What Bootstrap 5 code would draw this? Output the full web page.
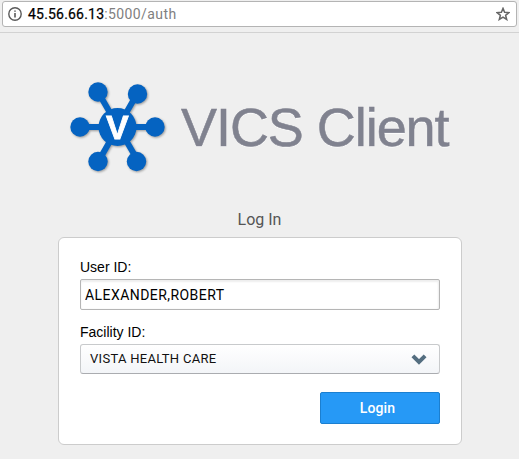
<!DOCTYPE html>
<html lang="en">
<head>
<meta charset="utf-8">
<meta name="viewport" content="width=device-width, initial-scale=1">
<title>VICS Client</title>
<link href="https://cdn.jsdelivr.net/npm/bootstrap@5.3.0/dist/css/bootstrap.min.css" rel="stylesheet">
<style>
body{background:#efefef;font-family:"Liberation Sans",Arial,sans-serif;font-size:14px;line-height:16px;color:#000;height:459px;overflow:hidden}
.browser-bar{height:33px;padding:1px 2px 0;border-bottom:1px solid #d2d2d2}
.address{height:26px;background:#fff;border:1px solid #b4b4b4;border-radius:3px;padding:0 6px 0 5px;font-family:Roboto,sans-serif;font-size:14px}
.address .host{margin-left:6px;letter-spacing:.2px;-webkit-text-stroke:.25px #000}
.address .path{color:#808080;letter-spacing:.4px}
.brand{height:94px;margin-top:48px;padding-left:68px}
.brand h1{font-size:54px;line-height:60px;letter-spacing:-1.05px;color:#80828f;-webkit-text-stroke:.5px #80828f;text-shadow:0 1px 0 #fff;font-weight:400;margin:0 0 3px 13px}
.login-title{margin-top:34px;height:28px;font-size:16px;line-height:22px;font-family:Roboto,sans-serif;color:#555}
.login-box{width:404px;height:208px;margin:0 auto 0 58px;border:1px solid #ccc;border-radius:6px;padding:21px}
.login-box label{height:20px;line-height:16px}
.login-box .facility-label{margin-top:14px}
.user-field{height:31px;padding:0 4px;border:1px solid #b5b5b5;border-radius:2px;background:#fff;box-shadow:inset 0 2px 2px #eee,inset -1px 0 2px #eee;font-family:Roboto,sans-serif;font-size:14px;letter-spacing:.44px;color:#000}
.facility{height:30px;padding:0 12px 0 9px;border:1px solid #c8cacc;border-bottom-color:#aaacb0;border-radius:3px;background:linear-gradient(#fff,#f3f5f8);font-family:Roboto,sans-serif;font-size:13px;letter-spacing:.29px;color:#111}
.login-actions{margin-top:18px}
.login-btn{width:120px;height:32px;padding:0 5px 1px 0;background:#2699f6;border:1px solid #1b7fd0;border-radius:2px;font:500 14px/30px Roboto,sans-serif;letter-spacing:.15px;color:#fff}
</style>
</head>
<body>
<header class="browser-bar">
  <div class="address d-flex align-items-center">
    <svg width="14" height="14" viewBox="0 0 14 14" fill="none" stroke="#5a5a5a"><circle cx="7" cy="7" r="6.2" stroke-width="1.4"/><path d="M7 6v4.4M7 3.400v1.400" stroke-width="1.6"/></svg>
    <span class="host">45.56.66.13</span><span class="path">:5000/auth</span>
    <svg class="ms-auto" width="14" height="14" viewBox="0 0 14 14" fill="none" stroke="#666" stroke-width="1.5"><path d="M7 1.400l1.600 3.900 4.300.3-3.300 2.700 1.100 4.200L7 10.200l-3.700 2.300 1.100-4.200L1.100 5.600l4.300-.3z"/></svg>
  </div>
</header>
<main>
  <div class="brand d-flex align-items-center">
    <svg width="100" height="96" viewBox="68 80 100 96" style="filter:drop-shadow(1px 1px 1px #999)">
      <g stroke="#0563c1" stroke-width="6"><path d="M80 127h75M98 92l40 69M137 94l-39 68"/></g>
      <g fill="#0563c1"><circle cx="117.500" cy="127" r="19"/><circle cx="98" cy="92" r="9.700"/><circle cx="137.500" cy="94" r="9.700"/><circle cx="80" cy="127" r="9.700"/><circle cx="155" cy="127" r="9.700"/><circle cx="98" cy="161.500" r="9.700"/><circle cx="136.500" cy="161.500" r="9.700"/></g>
      <text x="117.300" y="138.500" text-anchor="middle" font-family="Liberation Sans, sans-serif" font-weight="700" font-size="34" fill="#fff" stroke="#fff" stroke-width=".8">V</text>
    </svg>
    <h1>VICS Client</h1>
  </div>
  <div class="login-title text-center">Log In</div>
  <form class="login-box bg-white">
    <label class="d-block" for="user">User ID:</label>
    <input class="user-field w-100 d-block" id="user" type="text" value="ALEXANDER,ROBERT">
    <label class="facility-label d-block" for="facility">Facility ID:</label>
    <button class="facility w-100 d-flex align-items-center justify-content-between" id="facility" type="button">
      <span>VISTA HEALTH CARE</span>
      <svg width="16" height="11" viewBox="0 0 16 11" fill="none" stroke="#546e80" stroke-width="4"><path d="M1.900 1.900L8 8l6.100-6.100"/></svg>
    </button>
    <div class="login-actions d-flex justify-content-end"><button class="login-btn btn" type="button">Login</button></div>
  </form>
</main>
<script src="https://cdn.jsdelivr.net/npm/bootstrap@5.3.0/dist/js/bootstrap.bundle.min.js"></script>
</body>
</html>
